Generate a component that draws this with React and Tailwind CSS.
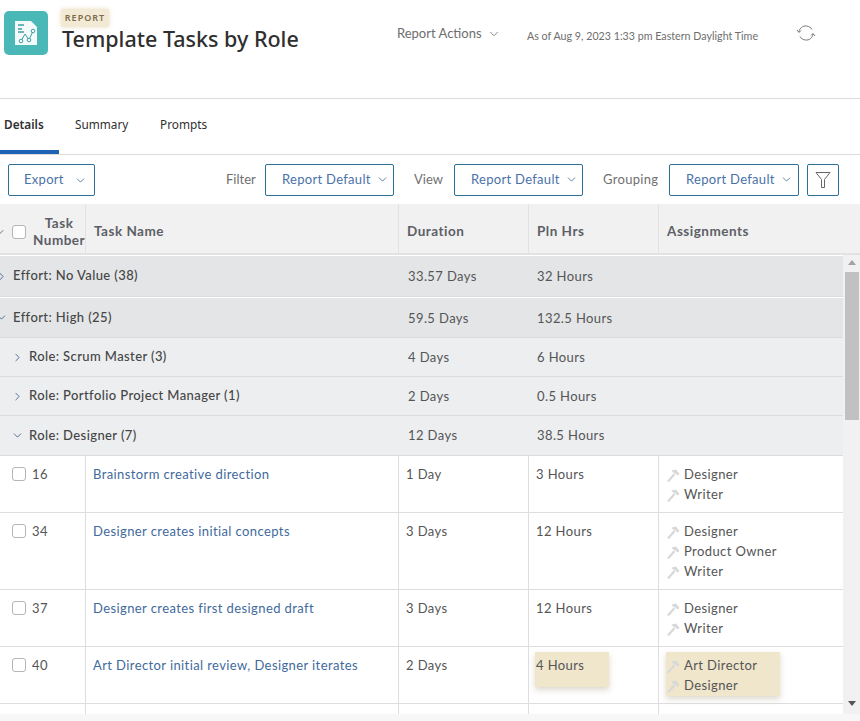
import React from 'react';
import { ChevronDown, ChevronRight } from 'lucide-react';

const cols = 'grid grid-cols-[86px_313px_130px_130px_1fr]';

const Hammer = () => (
  <svg width="13" height="13" viewBox="0 0 13 13" className="shrink-0">
    <path d="M1 12.5 L7.5 5" stroke="#d8d8d8" strokeWidth="2.2" fill="none" />
    <path d="M4.5 1.5 L9 0.5 L12.5 5 L10.5 6.5 L8.5 4.5 L6 3.5 Z" fill="#d8d8d8" />
  </svg>
);

const Select = ({ width = 'w-[129px]' }) => (
  <button className={`${width} h-[32px] pl-[16px] border border-[#2c6f97] rounded-[2px] flex items-center gap-[5px] text-[13px] text-[#4a72a8] tracking-[0.3px] whitespace-nowrap`}>
    Report Default
    <ChevronDown size={13} strokeWidth={1.5} className="text-[#3e6b94]" />
  </button>
);

const Box = () => <span className="block w-[14px] h-[14px] bg-white border border-[#b5b5b5] rounded-[3px] shrink-0" />;

const Group = ({ label, duration, hours, height, sub, open, mb, valuePad = 'pt-[2px]' }) => (
  <div className={`${cols} ${height} ${mb || ''} ${sub ? 'bg-[#eceef0]' : 'bg-[#e4e5e7]'} border-b border-[#dcdcdc] text-[13px] text-[#555] tracking-[0.4px]`}>
    <div className={`col-span-2 flex items-center whitespace-nowrap font-medium text-[#454545] ${sub ? 'pl-[11px] gap-[5px]' : 'gap-[5px]'}`}>
      <span className={sub ? '' : '-ml-[5px]'}>
        {open
          ? <ChevronDown size={13} strokeWidth={1.6} className="text-[#3e5f8a]" />
          : <ChevronRight size={13} strokeWidth={1.6} className="text-[#3e5f8a]" />}
      </span>
      {label}
    </div>
    <div className={`pl-[9px] flex items-center ${valuePad}`}>{duration}</div>
    <div className={`pl-[8px] flex items-center ${valuePad}`}>{hours}</div>
    <div />
  </div>
);

const Row = ({ num, name, duration, hours, people, height, flagged }) => (
  <div className={`${cols} ${height} bg-white border-b border-[#dedede] text-[13px] text-[#555] tracking-[0.4px]`}>
    <div className="flex items-start pt-[11px] pl-[12px] gap-[6px] border-r border-[#dedede]">
      <Box />
      <span className="leading-[15px]">{num}</span>
    </div>
    <div className="pl-[7px] pt-[10px] leading-[17px] text-[#3f6a9c] border-r border-[#dedede]">{name}</div>
    <div className="pl-[7px] pt-[10px] leading-[17px] border-r border-[#dedede]">{duration}</div>
    <div className="pl-[7px] pt-[10px] leading-[17px] border-r border-[#dedede]">
      {flagged
        ? <div className="-ml-[1px] -mt-[5px] w-[74px] h-[35px] pl-[1px] pt-[5px] bg-[#efe6cc] shadow-[0_3px_6px_rgba(120,100,60,0.25)]">{hours}</div>
        : hours}
    </div>
    <div className="pl-[8px] pt-[9px]">
      <div className={flagged ? '-ml-[1px] -mt-[4px] w-[114px] h-[44px] pl-[1px] pt-[4px] bg-[#efe6cc] shadow-[0_3px_6px_rgba(120,100,60,0.25)]' : ''}>
        {people.map((p) => (
          <div key={p} className="flex items-center gap-[4px] h-[20px]">
            <Hammer />
            {p}
          </div>
        ))}
      </div>
    </div>
  </div>
);

export default function App() {
  return (
    <div className="w-[860px] h-[721px] overflow-hidden bg-white flex flex-col font-['Lato','Liberation_Sans',sans-serif]">
      {/* page header */}
      <header className="h-[99px] shrink-0 border-b border-[#dcdcdc] flex items-start">
        <div className="w-[44px] h-[44px] mt-[11px] ml-[4px] rounded-[5px] bg-[#4bb8b8] flex items-center justify-center">
          <svg width="24" height="26" viewBox="0 0 24 26">
            <path d="M1 1 H17 L23 7 V25 H1 Z" fill="#f4fafa" />
            <path d="M4 5 H10 M4 9 H8 M4 12 H10" stroke="#3f9fa5" strokeWidth="1.5" />
            <path d="M7 21 L11 14 L15 20 L19 11" stroke="#3f9fa5" strokeWidth="1" fill="none" />
            <circle cx="7" cy="21" r="1.8" fill="#f4fafa" stroke="#3f9fa5" />
            <circle cx="15" cy="20" r="1.8" fill="#f4fafa" stroke="#3f9fa5" />
            <circle cx="19" cy="11" r="1.8" fill="#f4fafa" stroke="#3f9fa5" />
          </svg>
        </div>
        <div className="ml-[14px] w-[335px] font-['Noto_Sans',sans-serif]">
          <div className="mt-[9px] w-[48px] h-[18px] -ml-[1px] bg-[#f3ead6] rounded-[2px] flex items-center justify-center text-[9px] font-semibold tracking-[1px] text-[#7d6c4c] shadow-[0_0_4px_rgba(220,200,150,0.6)]">
            REPORT
          </div>
          <h1 className="text-[21.5px] leading-[26px] -mt-[1px] font-medium text-[#2f2f2f] whitespace-nowrap">Template Tasks by Role</h1>
        </div>
        <div className="mt-[25px] w-[130px] flex items-center gap-[5px] text-[13px] leading-[17px] text-[#6e6e6e] whitespace-nowrap">
          Report Actions
          <ChevronDown size={14} strokeWidth={1.4} />
        </div>
        <div className="mt-[28px] w-[269px] text-[10.7px] leading-[15px] text-[#6e6e6e] whitespace-nowrap">
          As of Aug 9, 2023 1:33 pm Eastern Daylight Time
        </div>
        <svg width="20" height="18" viewBox="0 0 20 18" className="mt-[24px] text-[#777]" fill="none" stroke="currentColor" strokeWidth="1">
          <path d="M3 8 C3.5 4 7 1.5 10.5 2 C13 2.3 15 3.5 16 5.5" />
          <path d="M17 10 C16.5 14 13 16.5 9.5 16 C7 15.7 5 14.5 4 12.5" />
          <path d="M1 6 L3 8.5 L5 6.5 M15 11.5 L17 9.5 L19 12" />
        </svg>
      </header>

      {/* tabs */}
      <nav className="h-[56px] shrink-0 border-b border-[#dcdcdc] flex text-[11.8px] font-['Noto_Sans',sans-serif] text-[#2f2f2f]">
        <div className="w-[59px] pl-[4px] pt-[17px] font-semibold border-b-[4px] border-[#1f63b5] h-[55px]">Details</div>
        <div className="ml-[16px] w-[54px] pt-[17px]">Summary</div>
        <div className="ml-[31px] pt-[17px]">Prompts</div>
      </nav>

      {/* toolbar */}
      <div className="h-[49px] shrink-0 flex items-center text-[13px]">
        <button className="ml-[8px] w-[87px] h-[32px] pl-[15px] pt-[1px] border border-[#2c6f97] rounded-[2px] flex items-center gap-[10px] text-[#4a72a8] tracking-[0.3px]">
          Export
          <ChevronDown size={13} strokeWidth={1.5} className="text-[#3e6b94]" />
        </button>
        <span className="ml-[131px] w-[39px] text-[#707070]">Filter</span>
        <Select />
        <span className="ml-[20px] w-[40px] text-[#707070]">View</span>
        <Select />
        <span className="ml-[20px] w-[66px] text-[#707070] tracking-[0.3px]">Grouping</span>
        <Select width="w-[130px]" />
        <button className="ml-[8px] w-[32px] h-[32px] border border-[#2c6f97] rounded-[2px] flex items-center justify-center">
          <svg width="16" height="18" viewBox="0 0 16 18" fill="none" stroke="#666" strokeWidth="1">
            <path d="M1 1.5 H15 L9.5 8.5 V16.5 H6.5 V8.5 Z" />
          </svg>
        </button>
      </div>

      {/* table header */}
      <div className={`${cols} h-[51px] shrink-0 bg-[#f1f1f1] border-b-2 border-[#e2e2e2] text-[13.5px] font-bold text-[#5c6066] tracking-[0.5px]`}>
        <div className="flex items-center pt-[6px] border-r border-[#e2e2e2]">
          <ChevronDown size={12} strokeWidth={1.8} className="-ml-[6px] mr-[6px] shrink-0 text-[#3e6b94]" />
          <Box />
          <div className="ml-[7px] text-center leading-[17px]">Task<br />Number</div>
        </div>
        <div className="pl-[8px] pt-[6px] flex items-center border-r border-[#e2e2e2]">Task Name</div>
        <div className="pl-[8px] pt-[6px] flex items-center border-r border-[#e2e2e2]">Duration</div>
        <div className="pl-[8px] pt-[6px] flex items-center border-r border-[#e2e2e2]">Pln Hrs</div>
        <div className="pl-[8px] pt-[6px] flex items-center">Assignments</div>
      </div>

      {/* table body and scrollbar */}
      <div className="flex shrink-0 h-[459px]">
        <div className="w-[843px] h-[459px] overflow-hidden pt-[1px]">
          <Group label="Effort: No Value (38)" duration="33.57 Days" hours="32 Hours" height="h-[41px]" mb="mb-[1px]" />
          <Group label="Effort: High (25)" duration="59.5 Days" hours="132.5 Hours" height="h-[40px]" open />
          <Group label="Role: Scrum Master (3)" duration="4 Days" hours="6 Hours" height="h-[39px]" sub />
          <Group label="Role: Portfolio Project Manager (1)" duration="2 Days" hours="0.5 Hours" height="h-[39px]" sub />
          <Group label="Role: Designer (7)" duration="12 Days" hours="38.5 Hours" height="h-[40px]" sub open valuePad="" />
          <Row num="16" name="Brainstorm creative direction" duration="1 Day" hours="3 Hours" people={['Designer', 'Writer']} height="h-[57px]" />
          <Row num="34" name="Designer creates initial concepts" duration="3 Days" hours="12 Hours" people={['Designer', 'Product Owner', 'Writer']} height="h-[77px]" />
          <Row num="37" name="Designer creates first designed draft" duration="3 Days" hours="12 Hours" people={['Designer', 'Writer']} height="h-[57px]" />
          <Row num="40" name="Art Director initial review, Designer iterates" duration="2 Days" hours="4 Hours" people={['Art Director', 'Designer']} height="h-[57px]" flagged />
          <div className={`${cols} h-[20px] bg-white`}>
            <div className="border-r border-[#dedede]" />
            <div className="border-r border-[#dedede]" />
            <div className="border-r border-[#dedede]" />
            <div className="border-r border-[#dedede]" />
          </div>
        </div>
        <div className="w-[17px] h-[459px] bg-[#f1f1f1] flex flex-col items-center pt-[5px]">
          <span className="w-0 h-0 border-x-[4px] border-x-transparent border-b-[5px] border-b-[#a3a3a3]" />
          <div className="w-[14px] h-[148px] mt-[7px] bg-[#c1c1c1]" />
          <div className="flex-1" />
          <span className="w-0 h-0 mb-[8px] border-x-[4px] border-x-transparent border-t-[5px] border-t-[#555]" />
        </div>
      </div>

      <div className="flex-1 bg-[#f7f7f7]" />
    </div>
  );
}
